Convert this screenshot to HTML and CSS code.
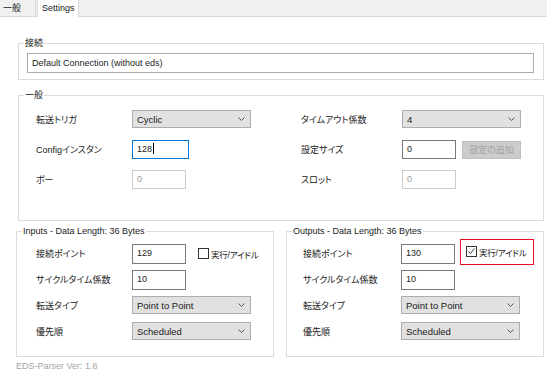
FILE: index.html
```html
<!DOCTYPE html>
<html lang="ja">
<head>
  <meta charset="UTF-8" />
  <title>Settings</title>
  <link rel="stylesheet" href="styles.css">
</head>
<body>
  <div class="tabs">
    <div class="tab">一般</div>
    <div class="tab active">Settings</div>
  </div>

  <div class="page">
    <fieldset class="group conn">
      <legend>接続</legend>
      <div class="conn-body">
        <div class="field wide">Default Connection (without eds)</div>
      </div>
    </fieldset>

    <fieldset class="group general">
      <legend>一般</legend>
      <div class="general-grid">
        <div class="label">転送トリガ</div>
        <div class="combo">Cyclic
          <svg width="7" height="4" viewBox="0 0 7 4"><path d="M0.5 0.5 L3.5 3.5 L6.5 0.5" /></svg>
        </div>
        <div></div>
        <div class="label">タイムアウト係数</div>
        <div class="combo">4
          <svg width="7" height="4" viewBox="0 0 7 4"><path d="M0.5 0.5 L3.5 3.5 L6.5 0.5" /></svg>
        </div>

        <div class="label">Configインスタン</div>
        <div class="cell"><div class="field focus">128<span class="caret"></span></div></div>
        <div></div>
        <div class="label">設定サイズ</div>
        <div class="cell">
          <div class="field">0</div>
          <div class="btn">設定の追加</div>
        </div>

        <div class="label">ボー</div>
        <div class="cell"><div class="field off">0</div></div>
        <div></div>
        <div class="label">スロット</div>
        <div class="cell"><div class="field off">0</div></div>
      </div>
    </fieldset>

    <div class="io">
      <fieldset class="group inputs">
        <legend>Inputs - Data Length: 36 Bytes</legend>
        <div class="io-grid">
          <div class="label">接続ポイント</div>
          <div class="cell">
            <div class="field">129</div>
            <div class="check"><span class="box"></span>実行/アイドル</div>
          </div>
          <div class="label">サイクルタイム係数</div>
          <div class="cell"><div class="field">10</div></div>
          <div class="label">転送タイプ</div>
          <div class="combo">Point to Point
            <svg width="7" height="4" viewBox="0 0 7 4"><path d="M0.5 0.5 L3.5 3.5 L6.5 0.5" /></svg>
          </div>
          <div class="label">優先順</div>
          <div class="combo">Scheduled
            <svg width="7" height="4" viewBox="0 0 7 4"><path d="M0.5 0.5 L3.5 3.5 L6.5 0.5" /></svg>
          </div>
        </div>
      </fieldset>

      <fieldset class="group outputs">
        <legend>Outputs - Data Length: 36 Bytes</legend>
        <div class="io-grid">
          <div class="label">接続ポイント</div>
          <div class="cell">
            <div class="field">130</div>
            <div class="check marked">
              <span class="box"><svg width="9" height="9" viewBox="0 0 9 9"><path d="M1.5 4.5 L3.5 6.5 L7.5 1.5" /></svg></span>実行/アイドル
            </div>
          </div>
          <div class="label">サイクルタイム係数</div>
          <div class="cell"><div class="field">10</div></div>
          <div class="label">転送タイプ</div>
          <div class="combo">Point to Point
            <svg width="7" height="4" viewBox="0 0 7 4"><path d="M0.5 0.5 L3.5 3.5 L6.5 0.5" /></svg>
          </div>
          <div class="label">優先順</div>
          <div class="combo">Scheduled
            <svg width="7" height="4" viewBox="0 0 7 4"><path d="M0.5 0.5 L3.5 3.5 L6.5 0.5" /></svg>
          </div>
        </div>
      </fieldset>
    </div>

    <div class="version">EDS-Parser Ver: 1.6</div>
  </div>
</body>
</html>
```

FILE: styles.css
```css
body {
  margin: 0;
  width: 547px;
  height: 383px;
  background: #ffffff;
  font-family: "Liberation Sans", "Noto Sans CJK JP", sans-serif;
  font-size: 9px;
  font-feature-settings: "palt";
  color: #1a1a1a;
  overflow: hidden;
}

.tabs {
  display: flex;
  height: 16px;
  background: #f0f0f0;
  border-bottom: 1px solid #dadada;
}

.tab {
  padding: 0 3px;
  width: 29px;
  line-height: 16px;
  border-right: 1px solid #dadada;
}

.tab.active {
  width: 36px;
  margin-left: 1px;
  padding: 0 0 0 4px;
  height: 17px;
  background: #ffffff;
  border-left: 1px solid #dadada;
  color: #222;
}

.page {
  padding-top: 20px;
}

.group {
  margin: 0 0 0 18px;
  padding: 0;
  width: 526px;
  box-sizing: border-box;
  min-inline-size: 0;
  border: 1px solid #dcdcdc;
}

.group legend {
  margin-left: 5px;
  padding: 0 1px;
  line-height: 12px;
  color: #222;
}

.conn-body {
  padding: 4px 9px 6px 8px;
}

.general {
  margin-top: 9px;
}

.general-grid {
  display: grid;
  grid-template-columns: 96px 119px 50px 101px 119px;
  grid-auto-rows: 19px;
  row-gap: 11px;
  padding: 9px 0 31px 17px;
}

.label {
  align-self: center;
  white-space: nowrap;
}

.cell {
  display: flex;
  align-items: center;
  gap: 6px;
}

.field {
  flex-shrink: 0;
  box-sizing: border-box;
  width: 54px;
  height: 19px;
  padding: 1px 4px;
  line-height: 14px;
  border: 1px solid #7a7a7a;
  background: #fff;
  white-space: nowrap;
}

.field.wide {
  width: 507px;
  height: 20px;
  padding-top: 2px;
  border-color: #adadad;
}

.field.focus {
  width: 57px;
  border-color: #0078d7;
}

.field.off {
  border-color: #cccccc;
  color: #9a9a9a;
}

.caret {
  display: inline-block;
  width: 1px;
  height: 11px;
  margin-left: 1px;
  vertical-align: -2px;
  background: #000;
}

.combo {
  box-sizing: border-box;
  height: 18px;
  padding: 0 5px 0 4px;
  display: flex;
  align-items: center;
  justify-content: space-between;
  background: #e1e1e1;
  border: 1px solid #adadad;
  font-size: 9.5px;
}

.combo svg path {
  fill: none;
  stroke: #555;
  stroke-width: 1;
}

.btn {
  flex-shrink: 0;
  box-sizing: border-box;
  width: 59px;
  height: 18px;
  line-height: 16px;
  text-align: center;
  background: #cccccc;
  border: 1px solid #bfbfbf;
  color: #a3a3a3;
}

.io {
  display: flex;
  gap: 12px;
  margin-top: 4px;
  padding-left: 16px;
}

.io .group {
  margin: 0;
  width: 258px;
}

.io-grid {
  display: grid;
  grid-template-columns: 96px 119px;
  grid-auto-rows: 19px;
  row-gap: 7px;
  padding: 7px 0 15px 19px;
}

.outputs .io-grid {
  grid-template-columns: 98px 119px;
  padding-left: 16px;
}

.io .field {
  width: 54px;
  height: 20px;
}

.check {
  flex-shrink: 0;
  display: flex;
  align-items: center;
  gap: 2px;
  margin-left: 6px;
  font-size: 8.5px;
  letter-spacing: -0.2px;
  white-space: nowrap;
}

.box {
  box-sizing: border-box;
  width: 11px;
  height: 11px;
  border: 1px solid #333;
  background: #fff;
  display: flex;
  align-items: center;
  justify-content: center;
}

.box path {
  fill: none;
  stroke: #333;
  stroke-width: 1;
}

.check.marked {
  box-sizing: border-box;
  width: 74px;
  height: 26px;
  margin-left: -1px;
  margin-top: -4px;
  padding-left: 5px;
  border: 1px solid #e81123;
}

.version {
  margin-top: 3px;
  padding-left: 16px;
  line-height: 12px;
  color: #a6a6a6;
}
```
